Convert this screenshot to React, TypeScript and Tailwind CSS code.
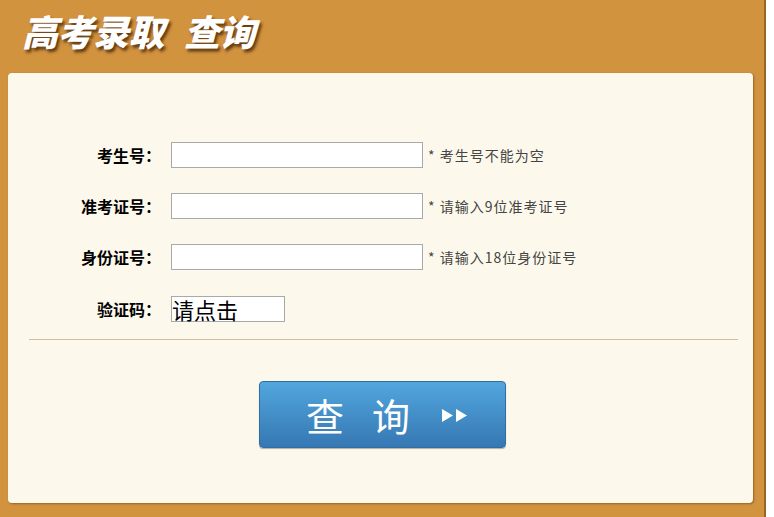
import React from "react";

const rows = [
  { label: "考生号：", hint: "* 考生号不能为空" },
  { label: "准考证号：", hint: "* 请输入9位准考证号" },
  { label: "身份证号：", hint: "* 请输入18位身份证号" },
];

export default function App() {
  return (
    <div
      className="w-[774px] h-[517px] bg-white flex"
      style={{ fontFamily: '"Noto Sans CJK SC", "Noto Sans", sans-serif' }}
    >
      <div className="w-[766px] h-full bg-[#D2933F] border-r-2 border-[#9a6423] pl-2 pr-[11px] flex flex-col">
        <div className="h-[73px] flex items-start pt-[6px] pl-[14px]">
          <div
            className="text-white font-black italic text-[36px] leading-[48px] tracking-[-0.5px]"
            style={{ textShadow: "2px 3px 3px rgba(60,30,0,0.75)" }}
          >
            <span>高考录取</span>
            <span className="ml-[20px]">查询</span>
          </div>
        </div>
        <div className="h-[430px] rounded-[4px] bg-[#FCF9EC] shadow-[1px_1px_2px_rgba(80,40,0,0.45)] flex flex-col pt-[69px]">
          <div className="flex flex-col gap-[25px]">
            {rows.map((r) => (
              <div key={r.label} className="flex items-center h-[26px]">
                <div className="w-[153px] text-right text-[16px] font-bold text-black leading-[26px]">
                  {r.label}
                </div>
                <div className="ml-[10px] w-[252px] h-[26px] bg-white border border-[#a9a9a9]" />
                <div className="ml-[5px] text-[14px] tracking-[1px] text-[#444] leading-[26px]">{r.hint}</div>
              </div>
            ))}
            <div className="flex items-center h-[26px] mt-[1px]">
              <div className="w-[153px] text-right text-[16px] font-bold text-black leading-[26px]">
                验证码：
              </div>
              <div className="ml-[10px] w-[114px] h-[26px] bg-white border border-[#a9a9a9] flex items-end">
                <span className="text-[22px] leading-[24px] text-black">请点击</span>
              </div>
            </div>
          </div>
          <div className="mt-[17px] ml-[21px] mr-[15px] h-px bg-[#cdbfa3]" />
          <div className="mt-[41px] flex justify-center pl-[4px]">
            <button className="w-[247px] h-[67px] rounded-[4px] border border-[#2f6ea3] bg-gradient-to-b from-[#52a6de] to-[#3678b3] shadow-[0_1px_1px_rgba(0,0,0,0.3)] flex items-center pl-[46px] text-white">
              <span className="text-[38px] font-normal leading-none">查</span>
              <span className="ml-[28px] text-[38px] font-normal leading-none">询</span>
              <svg className="ml-[32px] mt-[2px]" width="26" height="13" viewBox="0 0 26 13">
                <polygon points="0,0 11,6.5 0,13" fill="white" />
                <polygon points="14,0 25,6.5 14,13" fill="white" />
              </svg>
            </button>
          </div>
        </div>
      </div>
    </div>
  );
}
